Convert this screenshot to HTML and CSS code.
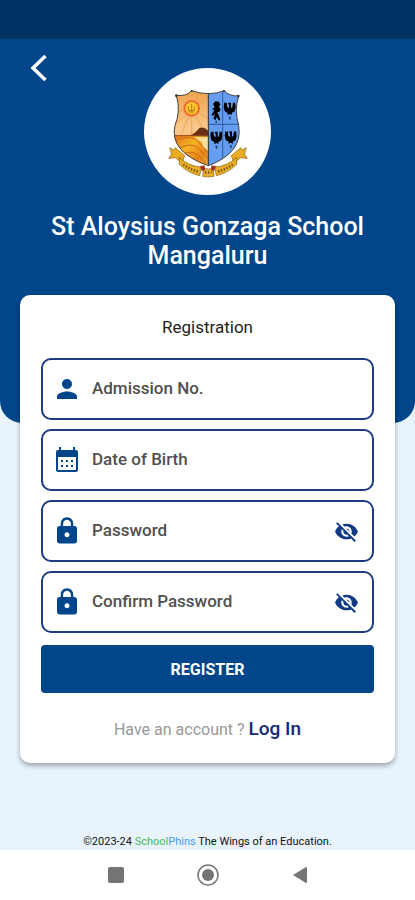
FILE: index.html
```
<!DOCTYPE html>
<html lang="en">
  <head>
    <meta charset="UTF-8" />
    <meta name="viewport" content="width=device-width, initial-scale=1.0" />
    <title>Registration - St Aloysius Gonzaga School</title>
    <link rel="stylesheet" href="styles.css">
  </head>
  <body>
    <div class="status-bar"></div>

    <header class="header">
      <button class="back" type="button" aria-label="Back">
        <svg width="18" height="28" viewBox="0 0 18 28">
          <path d="M15.500 2 3 14l12.500 12" fill="none" stroke="#fff" stroke-width="3.500" />
        </svg>
      </button>

      <!-- School crest -->
      <div class="crest">
        <svg viewBox="20 18 381 381" role="img" aria-label="School crest">
          <defs>
            <clipPath id="shield">
              <path d="M117 100Q148 104 163 86Q188 95 212 95Q240 95 260 86Q276 103 304 102Q290 145 304 190Q318 272 213 311Q95 270 113 190Q131 148 117 100Z" />
            </clipPath>
            <linearGradient id="sky" x1="0" y1="0" x2="0" y2="1">
              <stop offset="0" stop-color="#f0a04a" />
              <stop offset="0.5" stop-color="#f9c98d" />
              <stop offset="1" stop-color="#f5a73c" />
            </linearGradient>
            <linearGradient id="land" x1="0" y1="0" x2="1" y2="1">
              <stop offset="0" stop-color="#e0691d" />
              <stop offset="0.4" stop-color="#f5b324" />
              <stop offset="0.7" stop-color="#e9831d" />
              <stop offset="1" stop-color="#f3ba35" />
            </linearGradient>
            <g id="eagle">
              <path d="M-16-19l-2 14 3 13 9 5-1 6 7-3 7 3-1-6 9-5 3-13-2-14-4 3-2-3-2 15-4 2V-18h-7l-2 4 3 2V-2l-5-2-2-15-3 3z" />
              <path d="M-3 24h7l-2 9h-3z" fill="#29405e" />
            </g>
          </defs>

          <g fill="#e9ae22" stroke="#8a6015" stroke-width="2">
            <path d="M97 257l12 7 5-7 28 24-8 22-20-16-20 2 9-13z" />
            <path d="M327 257l-12 7-5-7-28 24 8 22 20-16 20 2-9-13z" />
            <path d="M126 286q30 28 66 29l-5 26q-36-8-61-34z" />
            <path d="M298 286q-30 28-66 29l5 26q36-8 61-34z" />
            <path d="M199 319q14 4 28 0l3 24q-17 4-34 0z" />
          </g>
          <path d="M188 313l14-3 1 14-9 4zM236 313l-14-3-1 14 9 4z" fill="#9e3525" />
          <g fill="none" stroke="#6a4812" stroke-width="7" stroke-dasharray="4 5">
            <path d="M138 307q20 16 46 22" />
            <path d="M286 307q-20 16-46 22" />
            <path d="M203 331h20" />
          </g>

          <g clip-path="url(#shield)">
            <path d="M100 80h113v240H100z" fill="url(#sky)" />
            <g stroke="#e99845" stroke-width="2">
              <path d="M163 140L105 92M163 140l-20-58M163 140l28-60M163 140l50-38M163 140l52 30M163 140l42 76M163 140v80M163 140l-32 80M163 140l-60 58M163 140l-60 12" />
            </g>
            <path d="M100 221h113v100H100z" fill="url(#land)" />
            <path d="M105 240q40-22 72-8l36 40M116 263q40-23 64-8l33 36M130 279q33-17 53 1l24 25" fill="none" stroke="#ca681b" stroke-width="3" />
            <path d="M171 226h42v43l-17-17-3-12z" fill="#f8df9a" />
            <path d="M156 222q18-8 31-25h14l12 10v16z" fill="#6a2e16" />
            <path d="M105 221h108" stroke="#994719" stroke-width="3" />
            <path d="M213 80h110v240H213z" fill="#659df0" />
            <path d="M213 187h100M256 85v220" stroke="#315b9d" stroke-width="3" />
            <path d="M245 119l-11-1-7 8 5 10-8 5 7 4-9 14 5 3 7-7-6 15 7 4 3-9 7 11 4-3-5-14-4-8 7-2 3-8-6-7 5-6z" />
            <path d="M234 176h5v7h-4z" fill="#29405e" />
            <use href="#eagle" x="277" y="140" />
            <use href="#eagle" x="237" y="227" />
            <use href="#eagle" x="280" y="226" />
          </g>
          <circle cx="163" cy="139" r="22" fill="#f6b127" stroke="#e94e2a" stroke-width="5" stroke-dasharray="5 2" />
          <circle cx="163" cy="139" r="17" fill="#f8c82d" />
          <path d="M153 132v14h18v-12M163 126v23M156 150h14" fill="none" stroke="#bc7616" stroke-width="3" />
          <path d="M213 95v216" stroke="#302b24" stroke-width="3" />
          <path d="M117 100Q148 104 163 86Q188 95 212 95Q240 95 260 86Q276 103 304 102Q290 145 304 190Q318 272 213 311Q95 270 113 190Q131 148 117 100Z" fill="none" stroke="#45403b" stroke-width="3" />
          <g fill="#373634">
            <circle cx="117" cy="101" r="4" />
            <circle cx="163" cy="87" r="3" />
            <circle cx="260" cy="87" r="3" />
            <circle cx="303" cy="102" r="4" />
          </g>
        </svg>
      </div>

      <h1>St Aloysius Gonzaga School Mangaluru</h1>
    </header>

    <main class="main">
      <form class="card">
        <h2>Registration</h2>

        <div class="fields">
          <div class="field">
            <label for="admission" aria-label="Admission No.">
              <svg class="icon" viewBox="0 0 24 24">
                <path d="M12 12c2.210 0 4-1.790 4-4s-1.790-4-4-4-4 1.790-4 4 1.790 4 4 4zm0 2c-2.670 0-8 1.340-8 4v2h16v-2c0-2.660-5.330-4-8-4z" />
              </svg>
            </label>
            <input id="admission" type="text" placeholder="Admission No.">
          </div>

          <div class="field">
            <label for="birth" aria-label="Date of Birth">
              <svg class="icon" viewBox="0 0 30 30">
                <path fill-rule="evenodd" d="M7 2h2v3h12V2h2v3h1q2 0 2 2v18q0 2-2 2H6q-2 0-2-2V7q0-2 2-2h1zM6 12v13h18V12z" />
                <path d="M9 15h2v2H9zM14 15h2v2h-2zM19 15h2v2h-2zM9 20h2v2H9zM14 20h2v2h-2zM19 20h2v2h-2z" />
              </svg>
            </label>
            <input id="birth" type="text" placeholder="Date of Birth">
          </div>

          <div class="field">
            <label for="password" aria-label="Password">
              <svg class="icon" viewBox="0 0 24 24">
                <path d="M18 8h-1V6c0-2.760-2.240-5-5-5S7 3.240 7 6v2H6c-1.100 0-2 .9-2 2v10c0 1.100.9 2 2 2h12c1.100 0 2-.9 2-2V10c0-1.100-.9-2-2-2zm-6 9c-1.100 0-2-.9-2-2s.9-2 2-2 2 .9 2 2-.9 2-2 2zm3.100-9H8.900V6c0-1.710 1.390-3.100 3.100-3.100s3.100 1.390 3.100 3.100v2z" />
              </svg>
            </label>
            <input id="password" type="password" placeholder="Password">
            <button class="toggle" type="button" aria-label="Show password">
              <svg viewBox="0 0 24 24">
                <path d="M12 7c2.760 0 5 2.240 5 5 0 .65-.13 1.260-.36 1.830l2.920 2.920c1.510-1.260 2.700-2.890 3.430-4.750-1.730-4.390-6-7.500-11-7.500-1.400 0-2.740.25-3.980.7l2.160 2.160C10.740 7.130 11.350 7 12 7zM2 4.270l2.280 2.280.46.46C3.080 8.300 1.780 10.020 1 12c1.730 4.390 6 7.500 11 7.500 1.550 0 3.030-.3 4.380-.84l.42.42L19.730 22 21 20.730 3.270 3 2 4.270zM7.530 9.800l1.550 1.550c-.05.21-.08.43-.08.65 0 1.660 1.340 3 3 3 .22 0 .44-.03.65-.08l1.550 1.550c-.67.33-1.410.53-2.200.53-2.760 0-5-2.240-5-5 0-.79.2-1.530.53-2.200zm4.310-.78l3.150 3.150.02-.16c0-1.660-1.340-3-3-3l-.17.01z" />
              </svg>
            </button>
          </div>

          <div class="field">
            <label for="confirm" aria-label="Confirm Password">
              <svg class="icon" viewBox="0 0 24 24">
                <path d="M18 8h-1V6c0-2.760-2.240-5-5-5S7 3.240 7 6v2H6c-1.100 0-2 .9-2 2v10c0 1.100.9 2 2 2h12c1.100 0 2-.9 2-2V10c0-1.100-.9-2-2-2zm-6 9c-1.100 0-2-.9-2-2s.9-2 2-2 2 .9 2 2-.9 2-2 2zm3.100-9H8.900V6c0-1.710 1.390-3.100 3.100-3.100s3.100 1.390 3.100 3.100v2z" />
              </svg>
            </label>
            <input id="confirm" type="password" placeholder="Confirm Password">
            <button class="toggle" type="button" aria-label="Show confirmed password">
              <svg viewBox="0 0 24 24">
                <path d="M12 7c2.760 0 5 2.240 5 5 0 .65-.13 1.260-.36 1.830l2.920 2.920c1.510-1.260 2.700-2.890 3.430-4.750-1.730-4.390-6-7.500-11-7.500-1.400 0-2.740.25-3.980.7l2.160 2.160C10.740 7.130 11.350 7 12 7zM2 4.270l2.280 2.280.46.46C3.080 8.300 1.780 10.020 1 12c1.730 4.390 6 7.500 11 7.500 1.550 0 3.030-.3 4.380-.84l.42.42L19.730 22 21 20.730 3.270 3 2 4.270zM7.530 9.800l1.550 1.550c-.05.21-.08.43-.08.65 0 1.660 1.340 3 3 3 .22 0 .44-.03.65-.08l1.550 1.550c-.67.33-1.410.53-2.200.53-2.760 0-5-2.240-5-5 0-.79.2-1.530.53-2.200zm4.310-.78l3.150 3.150.02-.16c0-1.660-1.340-3-3-3l-.17.01z" />
              </svg>
            </button>
          </div>
        </div>

        <button class="register" type="submit">REGISTER</button>
        <p class="login">Have an account ? <a href="#">Log In</a></p>
      </form>
    </main>

    <footer class="footer">
      ©2023-24 <span class="green">School</span><span class="blue">Phins</span> The Wings of an Education.
    </footer>

    <!-- Android navigation -->
    <nav class="nav-bar">
      <button type="button" aria-label="Recent apps">
        <svg viewBox="0 0 24 24"><rect x="4" y="4" width="16" height="16" rx="2" fill="#757575" /></svg>
      </button>
      <button type="button" aria-label="Home">
        <svg viewBox="0 0 24 24">
          <circle cx="12" cy="12" r="10" fill="none" stroke="#757575" stroke-width="1.500" />
          <circle cx="12" cy="12" r="6" fill="#757575" />
        </svg>
      </button>
      <button type="button" aria-label="Go back">
        <svg viewBox="0 0 24 24"><path d="M5 12l13-8q1 0 1 1v14q0 1-1 1z" fill="#757575" /></svg>
      </button>
    </nav>
  </body>
</html>
```

FILE: styles.css
```
* {
  box-sizing: border-box;
}

body {
  margin: 0;
  min-height: 100vh;
  display: flex;
  flex-direction: column;
  font-family: Roboto, "Liberation Sans", sans-serif;
  background: #e8f3fc;
}

button {
  border: 0;
  padding: 0;
  background: none;
  font-family: inherit;
  cursor: pointer;
}

svg {
  display: block;
}

.status-bar {
  height: 39px;
  background: #003264;
}

.header {
  position: relative;
  display: flex;
  flex-direction: column;
  align-items: center;
  padding: 29px 40px 153px;
  background: #01458b;
  border-radius: 0 0 22px 22px;
}

.back {
  position: absolute;
  top: 15px;
  left: 30px;
}

.crest {
  width: 127px;
  height: 127px;
  border-radius: 50%;
  background: #fff;
}

h1 {
  margin: 17px 0 0;
  font-size: 25px;
  line-height: 29px;
  font-weight: 500;
  color: #fff;
  text-align: center;
}

/* The card overlaps the header */
.main {
  position: relative;
  margin-top: -128px;
  padding: 0 20px;
}

.card {
  padding: 22px 21px;
  background: #fff;
  border-radius: 10px;
  box-shadow: 0 3px 5px rgba(0, 0, 0, 0.3);
}

h2 {
  margin: 0 0 21px;
  font-size: 17px;
  line-height: 20px;
  font-weight: 400;
  color: #222;
  text-align: center;
}

.fields {
  display: flex;
  flex-direction: column;
  gap: 9px;
}

.field {
  display: flex;
  align-items: center;
  height: 62px;
  padding: 0 13px 0 9px;
  border: 2px solid #1d3b80;
  border-radius: 10px;
}

.icon {
  width: 30px;
  height: 30px;
  fill: #01458b;
}

.field input {
  flex: 1;
  min-width: 0;
  margin-left: 10px;
  padding: 0 0 2px;
  border: 0;
  outline: 0;
  background: none;
  font-family: inherit;
  font-size: 17px;
  font-weight: 500;
  color: #444;
}

.field input::placeholder {
  color: #505050;
}

.toggle svg {
  width: 25px;
  height: 25px;
  fill: #123985;
}

.register {
  width: 100%;
  height: 48px;
  margin-top: 12px;
  border-radius: 4px;
  background: #01458b;
  color: #fff;
  font-size: 16px;
  font-weight: 700;
}

.login {
  margin: 25px 0 0;
  font-size: 16px;
  line-height: 22px;
  color: #999;
  text-align: center;
}

.login a {
  color: #10277c;
  font-size: 19px;
  font-weight: 500;
  text-decoration: none;
}

.footer {
  margin-top: auto;
  padding: 8px 20px 2px;
  font-size: 11px;
  line-height: 12px;
  font-weight: 400;
  color: #111;
  text-align: center;
}

.green {
  color: #49b957;
}

.blue {
  color: #3d9cef;
}

.nav-bar {
  display: flex;
  justify-content: center;
  align-items: center;
  gap: 68px;
  height: 50px;
  background: #fff;
}

.nav-bar svg {
  width: 24px;
  height: 24px;
}
```
